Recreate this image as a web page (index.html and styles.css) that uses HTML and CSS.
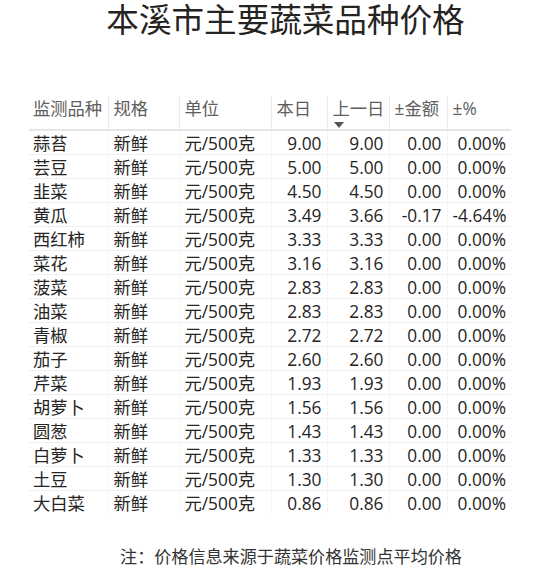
FILE: index.html
```html
<!DOCTYPE html>
<html lang="zh">
<head>
<meta charset="utf-8">
<title>本溪市主要蔬菜品种价格</title>
<link rel="stylesheet" href="styles.css">
</head>
<body>
<div class="page">
  <h1 class="title">本溪市主要蔬菜品种价格</h1>
  <table class="grid">
    <colgroup>
      <col class="c1"><col class="c2"><col class="c3"><col class="c4"><col class="c5"><col class="c6"><col class="c7">
    </colgroup>
    <thead>
      <tr>
        <th>监测品种</th><th>规格</th><th>单位</th><th>本日</th>
        <th class="sorted">上一日<span class="arrow"></span></th>
        <th>±金额</th><th>±%</th>
      </tr>
    </thead>
    <tbody>
      <tr><td>蒜苔</td><td>新鲜</td><td>元/500克</td><td class="n">9.00</td><td class="n">9.00</td><td class="n">0.00</td><td class="n">0.00%</td></tr>
      <tr><td>芸豆</td><td>新鲜</td><td>元/500克</td><td class="n">5.00</td><td class="n">5.00</td><td class="n">0.00</td><td class="n">0.00%</td></tr>
      <tr><td>韭菜</td><td>新鲜</td><td>元/500克</td><td class="n">4.50</td><td class="n">4.50</td><td class="n">0.00</td><td class="n">0.00%</td></tr>
      <tr><td>黄瓜</td><td>新鲜</td><td>元/500克</td><td class="n">3.49</td><td class="n">3.66</td><td class="n">-0.17</td><td class="n">-4.64%</td></tr>
      <tr><td>西红柿</td><td>新鲜</td><td>元/500克</td><td class="n">3.33</td><td class="n">3.33</td><td class="n">0.00</td><td class="n">0.00%</td></tr>
      <tr><td>菜花</td><td>新鲜</td><td>元/500克</td><td class="n">3.16</td><td class="n">3.16</td><td class="n">0.00</td><td class="n">0.00%</td></tr>
      <tr><td>菠菜</td><td>新鲜</td><td>元/500克</td><td class="n">2.83</td><td class="n">2.83</td><td class="n">0.00</td><td class="n">0.00%</td></tr>
      <tr><td>油菜</td><td>新鲜</td><td>元/500克</td><td class="n">2.83</td><td class="n">2.83</td><td class="n">0.00</td><td class="n">0.00%</td></tr>
      <tr><td>青椒</td><td>新鲜</td><td>元/500克</td><td class="n">2.72</td><td class="n">2.72</td><td class="n">0.00</td><td class="n">0.00%</td></tr>
      <tr><td>茄子</td><td>新鲜</td><td>元/500克</td><td class="n">2.60</td><td class="n">2.60</td><td class="n">0.00</td><td class="n">0.00%</td></tr>
      <tr><td>芹菜</td><td>新鲜</td><td>元/500克</td><td class="n">1.93</td><td class="n">1.93</td><td class="n">0.00</td><td class="n">0.00%</td></tr>
      <tr><td>胡萝卜</td><td>新鲜</td><td>元/500克</td><td class="n">1.56</td><td class="n">1.56</td><td class="n">0.00</td><td class="n">0.00%</td></tr>
      <tr><td>圆葱</td><td>新鲜</td><td>元/500克</td><td class="n">1.43</td><td class="n">1.43</td><td class="n">0.00</td><td class="n">0.00%</td></tr>
      <tr><td>白萝卜</td><td>新鲜</td><td>元/500克</td><td class="n">1.33</td><td class="n">1.33</td><td class="n">0.00</td><td class="n">0.00%</td></tr>
      <tr><td>土豆</td><td>新鲜</td><td>元/500克</td><td class="n">1.30</td><td class="n">1.30</td><td class="n">0.00</td><td class="n">0.00%</td></tr>
      <tr class="last"><td>大白菜</td><td>新鲜</td><td>元/500克</td><td class="n">0.86</td><td class="n">0.86</td><td class="n">0.00</td><td class="n">0.00%</td></tr>
    </tbody>
  </table>
  <p class="note">注：价格信息来源于蔬菜价格监测点平均价格</p>
</div>
</body>
</html>
```

FILE: styles.css
```css
html, body {
  margin: 0;
  padding: 0;
  background: #ffffff;
}

.page {
  width: 544px;
  height: 570px;
  overflow: hidden;
  font-family: "Open Sans", "Noto Sans CJK SC", sans-serif;
  color: #252423;
}

.title {
  margin: 0;
  padding: 2px 0 0 27px;
  height: 34px;
  line-height: 32px;
  font-size: 32.6px;
  font-weight: normal;
  text-align: center;
  white-space: nowrap;
  color: #252423;
  font-family: "Noto Sans CJK SC", sans-serif;
}

.grid {
  margin: 60px 0 0 29px;
  width: 482px;
  border-collapse: collapse;
  table-layout: fixed;
  font-size: 17.3px;
}

.c1 { width: 79px; }
.c2 { width: 71px; }
.c3 { width: 92px; }
.c4 { width: 56px; }
.c5 { width: 62px; }
.c6 { width: 58px; }
.c7 { width: 64px; }

.grid th {
  height: 34px;
  padding: 0 5px 0 5px;
  vertical-align: top;
  text-align: left;
  font-weight: normal;
  color: #605e5c;
  line-height: 26px;
  white-space: nowrap;
  border-left: 1px solid #ebebeb;
  border-bottom: 2px solid #e6e6e6;
  box-sizing: border-box;
}

.grid th:first-child {
  border-left: none;
  padding-left: 4px;
}

.grid th.sorted {
  position: relative;
}

.arrow {
  position: absolute;
  left: 6px;
  top: 26px;
  width: 0;
  height: 0;
  border-left: 5px solid transparent;
  border-right: 5px solid transparent;
  border-top: 6px solid #555555;
}

.grid td {
  height: 23.6px;
  padding: 2px 5px 0 5px;
  line-height: 21px;
  white-space: nowrap;
  border-left: 1px solid #f5f5f5;
  border-bottom: 1px solid #efefef;
  box-sizing: border-box;
  vertical-align: middle;
}

.grid td:first-child {
  border-left: none;
  padding-left: 4px;
}

.grid tr.last td {
  border-bottom: none;
}

.grid td.n {
  text-align: right;
  padding-right: 5px;
}

.note {
  margin: 30px 0 0 0;
  padding-left: 38px;
  text-align: center;
  font-size: 17.1px;
  line-height: 24px;
  color: #333333;
  font-family: "Noto Sans CJK SC", sans-serif;
}
```
